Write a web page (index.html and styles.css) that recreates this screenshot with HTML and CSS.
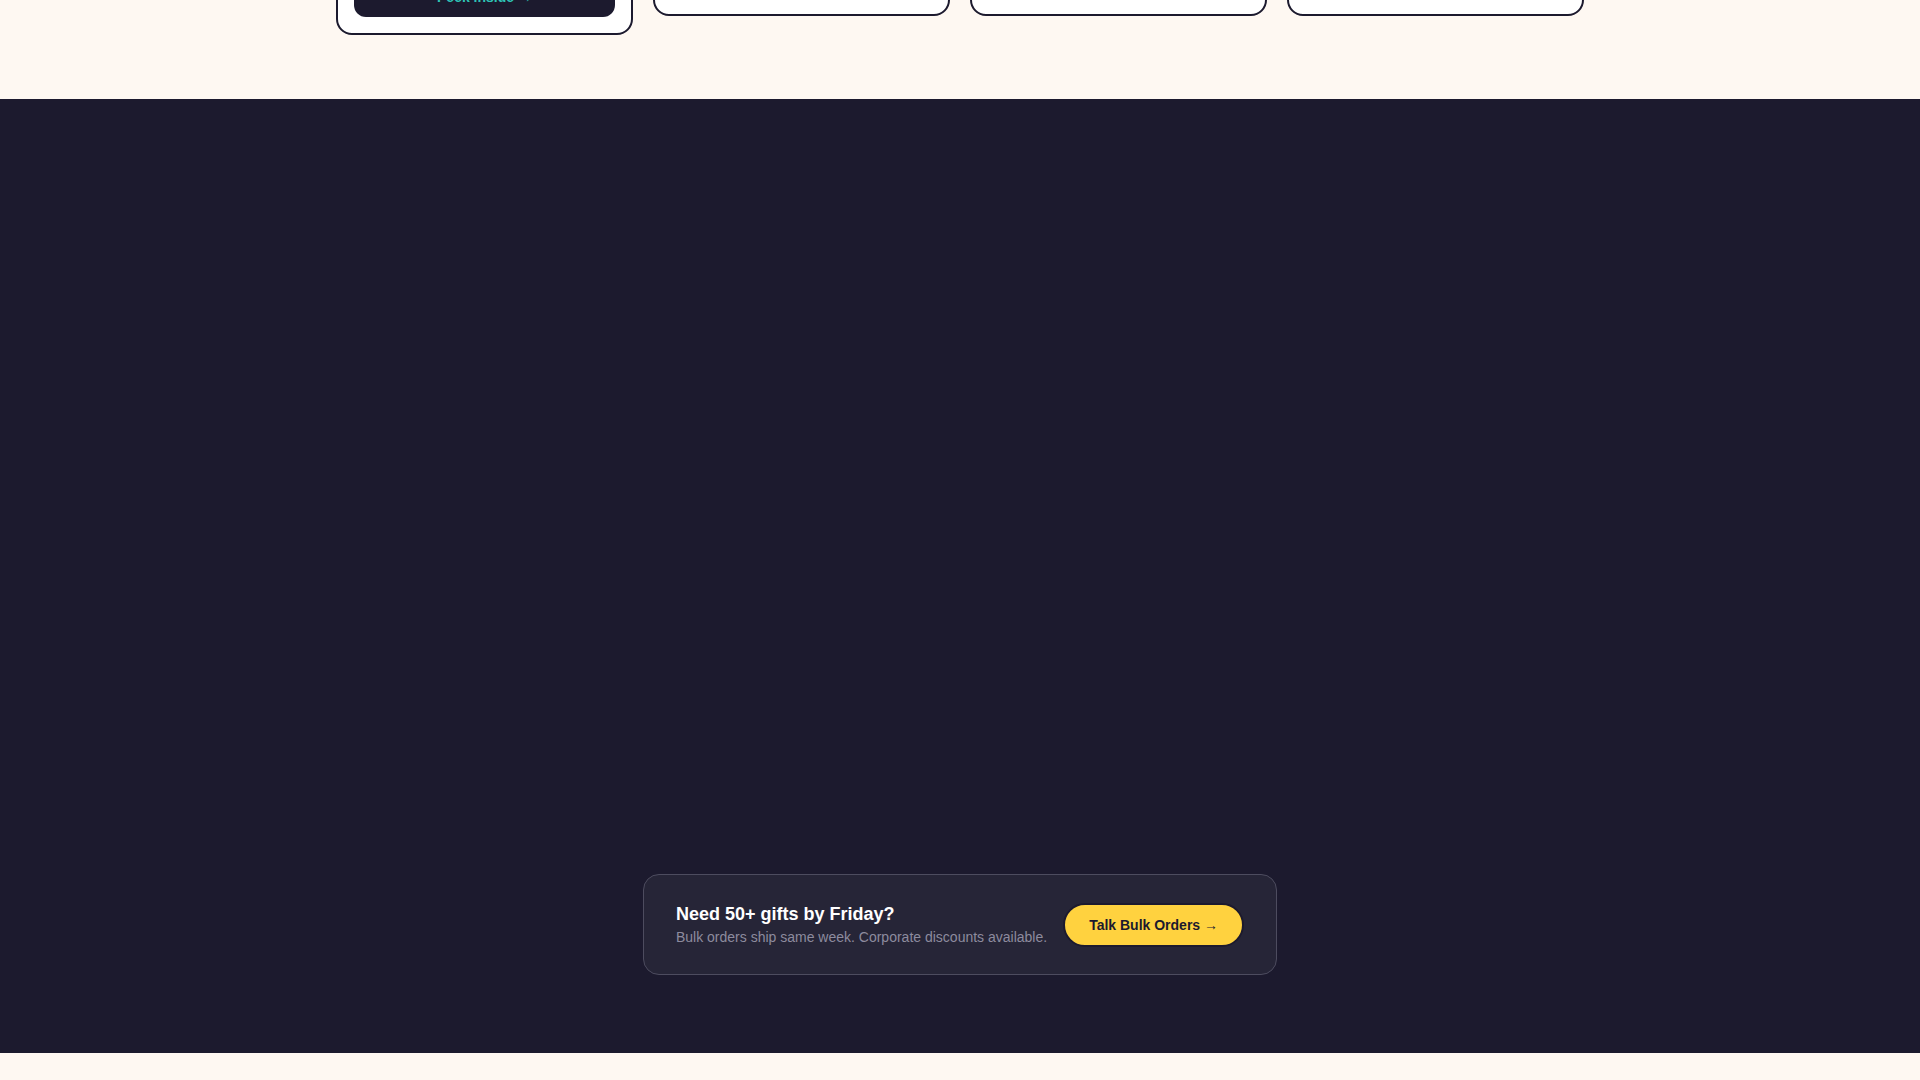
FILE: index.html
```html
<!DOCTYPE html>
<html lang="en">
<head>
    <meta charset="UTF-8">
    <meta name="viewport" content="width=device-width, initial-scale=1.0">
    <title>Boxwell | Curated Gift Boxes</title>
    <link rel="stylesheet" href="styles.css">
</head>
<body>
    <section class="picks">
        <div class="container">
            <div class="section-head">
                <h2>This week's picks</h2>
                <p>Hand-packed boxes, ready to ship.</p>
            </div>

            <div class="box-grid">
                <div class="box-card">
                    <div class="box-thumb thumb-coral"></div>
                    <h3>The Cozy Night In</h3>
                    <p class="price">$48</p>
                    <p class="tag">Bestseller</p>
                    <button class="peek">Peek inside &rarr;</button>
                </div>
                <div class="box-card">
                    <div class="box-thumb thumb-teal"></div>
                    <h3>Desk Survival Kit</h3>
                    <p class="price">$36</p>
                    <button class="peek">Peek inside &rarr;</button>
                </div>
                <div class="box-card">
                    <div class="box-thumb thumb-yellow"></div>
                    <h3>Sweet Tooth Crate</h3>
                    <p class="price">$42</p>
                    <button class="peek">Peek inside &rarr;</button>
                </div>
                <div class="box-card">
                    <div class="box-thumb thumb-lilac"></div>
                    <h3>Self-Care Sunday</h3>
                    <p class="price">$54</p>
                    <button class="peek">Peek inside &rarr;</button>
                </div>
            </div>
        </div>
    </section>

    <section class="bulk" id="bulk">
        <div class="container">
            <div class="reviews reveal">
                <h2>Loved by 12,000+ gift givers</h2>
            </div>

            <div class="bulk-cta">
                <div class="bulk-text">
                    <h3>Need 50+ gifts by Friday?</h3>
                    <p>Bulk orders ship same week. Corporate discounts available.</p>
                </div>
                <a href="#" class="bulk-btn">Talk Bulk Orders &rarr;</a>
            </div>
        </div>
    </section>

    <footer class="footer">
        <div class="container">
            <p>&copy; Boxwell Gift Co.</p>
        </div>
    </footer>

    <script src="script.js"></script>
</body>
</html>
```

FILE: styles.css
```css
:root {
    --ink: #1c1a2e;
    --cream: #fef8f2;
    --teal: #2ec4b6;
    --yellow: #ffd23f;
    --muted: #8d8b9e;
}

* {
    margin: 0;
    padding: 0;
    box-sizing: border-box;
    font-family: 'Liberation Sans', Arial, sans-serif;
}

body {
    background: var(--cream);
    color: var(--ink);
    line-height: 1.5;
}

.container {
    max-width: 1280px;
    margin: 0 auto;
    padding: 0 16px;
}

/* product picks */
.picks {
    padding: 64px 0;
}

.section-head {
    text-align: center;
    margin-bottom: 40px;
}

.section-head h2 {
    font-size: 2rem;
    font-weight: 700;
}

.box-grid {
    display: grid;
    grid-template-columns: repeat(4, 1fr);
    gap: 20px;
    align-items: start;
}

.box-card {
    background: white;
    border: 2px solid var(--ink);
    border-radius: 16px;
    padding: 16px;
}

.box-thumb {
    height: 220px;
    border-radius: 12px;
    margin-bottom: 16px;
}

.thumb-coral { background: #ff8a6b; }
.thumb-teal { background: #8fe3da; }
.thumb-yellow { background: #ffe38a; }
.thumb-lilac { background: #cbb8f5; }

.box-card h3 {
    font-size: 1.125rem;
}

.price {
    font-weight: 700;
    margin-bottom: 12px;
}

.tag {
    font-size: 0.75rem;
    line-height: 19px;
    height: 19px;
    color: #e0573a;
}

.peek {
    display: block;
    width: 100%;
    padding: 12px;
    border: none;
    border-radius: 12px;
    background: var(--ink);
    color: var(--teal);
    font-size: 14px;
    font-weight: 700;
    cursor: pointer;
}

/* bulk orders */
.bulk {
    background: var(--ink);
    padding: 80px 0 78px;
    scroll-margin-top: 99px;
}

.bulk .container {
    display: flex;
    flex-direction: column;
    align-items: center;
}

.reviews {
    width: 100%;
    height: 648px;
    margin-bottom: 47px;
    color: white;
    text-align: center;
}

.reveal {
    opacity: 0;
    transform: translateY(24px);
    transition: opacity 0.6s, transform 0.6s;
}

.bulk-cta {
    display: flex;
    align-items: center;
    gap: 16px;
    padding: 27px 32px 26px;
    background: #262537;
    border: 1px solid #4d4c5f;
    border-radius: 16px;
}

.bulk-text h3 {
    color: white;
    font-size: 18px;
    font-weight: 700;
    line-height: 1.4;
}

.bulk-text p {
    color: var(--muted);
    font-size: 14px;
    line-height: 1.5;
}

.bulk-btn {
    display: inline-flex;
    align-items: center;
    justify-content: center;
    height: 44px;
    padding: 0 24px;
    background: var(--yellow);
    color: var(--ink);
    border: 2px solid var(--ink);
    border-radius: 999px;
    font-size: 14px;
    font-weight: 700;
    text-decoration: none;
    white-space: nowrap;
}

.footer {
    padding: 64px 0 200px;
    text-align: center;
    color: #8a8797;
    font-size: 14px;
}
```

FILE: script.js
```js
// jump straight to the bulk orders block
document.getElementById('bulk').scrollIntoView();
```
